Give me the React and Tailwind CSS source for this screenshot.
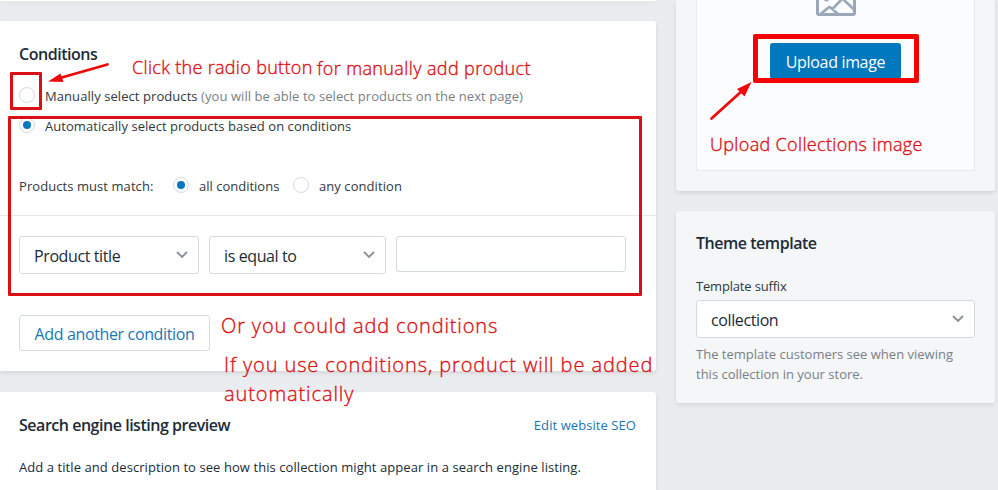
import React from "react";

function Radio({ checked }) {
  return (
    <span className="flex size-4 shrink-0 items-center justify-center rounded-full border border-[#d3dbe2] bg-white">
      {checked && <span className="size-2 rounded-full bg-[#0078bd]" />}
    </span>
  );
}

function Select({ children, className }) {
  return (
    <div className={`flex h-[38px] items-center justify-between rounded-[3px] border border-[#d3dbe2] bg-white pr-2.5 pl-3.5 text-base tracking-[-0.39px] ${className}`}>
      <span className="pt-0.5">{children}</span>
      <svg width="12" height="8" viewBox="0 0 12 8" fill="none" stroke="#8a9199" strokeWidth="1.9">
        <path d="M1 1l5 5 5-5" />
      </svg>
    </div>
  );
}

const card = "shadow-[0_2px_4px_rgba(0,0,0,0.1)]";
const small = "text-[13px] leading-5 tracking-[0.07px]";
const heading = "h-6 text-base leading-6 font-semibold tracking-[-0.47px] text-[#212b35]";
const note = "absolute whitespace-nowrap font-light text-[#dc1014] [-webkit-text-stroke:0.35px_#dc1014]";

export default function App() {
  return (
    <div className="relative flex h-[490px] w-[998px] gap-5 overflow-hidden bg-[#e9edf0] font-['Open_Sans',sans-serif] text-sm text-[#31373d]">
      <main className="flex w-[656px] flex-col whitespace-nowrap">
        <section className={`h-px bg-white ${card}`} />

        <section className={`mt-5 h-[350px] rounded-r-[3px] bg-white ${card}`}>
          <div className="h-[195px] border-b border-[#e6e9ec] px-[19px] pt-[21px]">
            <h2 className={heading}>Conditions</h2>
            <div className="mt-[15px] flex h-[30px] items-center gap-[10px]">
              <div className="pb-[2px]"><Radio /></div>
              <span className={small}>Manually select products <span className="text-[#798087]">(you will be able to select products on the next page)</span></span>
            </div>
            <div className="flex h-[30px] items-center gap-[10px]">
              <div className="pb-[2px]"><Radio checked /></div>
              <span className="text-[13px] leading-5 tracking-[0.05px]">Automatically select products based on conditions</span>
            </div>
            <div className={`mt-[30px] flex h-[30px] items-center ${small}`}>
              <span className="w-[154px]">Products must match:</span>
              <div className="pb-[2px]"><Radio checked /></div>
              <span className="ml-[10px] w-[94px] tracking-normal">all conditions</span>
              <div className="pb-[2px]"><Radio /></div>
              <span className="ml-[10px]">any condition</span>
            </div>
          </div>
          <div className="flex gap-[10px] px-[19px] pt-5 text-[#212b35]">
            <Select className="w-[180px]">Product title</Select>
            <Select className="w-[177px]">is equal to</Select>
            <div className="h-9 w-[230px] rounded-[3px] border border-[#d3dbe2] bg-white" />
          </div>
          <button className="mt-[41px] ml-[19px] h-9 w-[191px] rounded-[3px] border border-[#d3dbe2] pt-0.5 text-base tracking-[-0.36px] text-[#1878b5]">Add another condition</button>
        </section>

        <section className={`mt-[21px] h-[98px] rounded-tr-[3px] bg-white px-[19px] pt-[21px] ${card}`}>
          <div className="flex h-6 items-center justify-between pr-[1px]">
            <h2 className={heading}>Search engine listing preview</h2>
            <a className={`text-[#1878b5] ${small}`}>Edit website SEO</a>
          </div>
          <p className={`mt-5 text-[#212b35] ${small}`}>Add a title and description to see how this collection might appear in a search engine listing.</p>
        </section>
      </main>

      <aside className="flex w-[319px] flex-col gap-5 whitespace-nowrap">
        <section className={`h-[191px] rounded-b-[3px] bg-[#f4f6f8] px-5 ${card}`}>
          <div className="flex h-[171px] flex-col items-center border border-t-0 border-[#e6e9ed] bg-[#fafcfd]">
            <svg width="40" height="16" viewBox="0 0 40 16" fill="none" stroke="#98a8b8" strokeWidth="3">
              <path d="M1.5-4v17q0 1.500 1.500 1.500h34q1.500 0 1.500-1.500v-17" />
              <path d="M4 14.500L12.500 7.500q1-.7 2 0L22 14M16 9.500L25.500-.5q1-.6 2 0L38 9.500" strokeWidth="2.6" />
              <circle cx="10.5" cy="-1" r="2.5" fill="#98a8b8" stroke="none" />
            </svg>
            <button className="mt-[27px] h-9 w-[131px] rounded-[3px] bg-[#0078bd] pt-0.5 text-base tracking-[-0.33px] text-white">Upload image</button>
          </div>
        </section>
        <section className={`h-[192px] rounded-[3px] bg-[#f4f6f8] px-5 pt-5 ${card}`}>
          <h2 className={heading}>Theme template</h2>
          <div className="mt-[21px] mb-[4px] text-[13px] leading-5 tracking-[-0.18px]">Template suffix</div>
          <Select className="w-[279px] text-[#212b35]">collection</Select>
          <p className="mt-1.5 text-[13px] leading-5 text-[#798087]">The template customers see when viewing<br />this collection in your store.</p>
        </section>
      </aside>

      <div className="absolute top-[72px] left-[10px] h-[38px] w-8 rounded-[1px] border-3 border-[#dc1014]" />
      <div className="absolute top-[116px] left-2 h-[180px] w-[634px] rounded-[1px] border-3 border-[#dc1014]" />
      <div className="absolute top-[34px] left-[753px] h-[49px] w-[166px] rounded-[2px] border-5 border-[#f70000]" />
      <svg className="absolute inset-0" width="998" height="490" fill="#ee0a0a" stroke="#ee0a0a">
        <path d="M107.500 64.500L60 78" strokeWidth="2.8" strokeLinecap="round" />
        <path d="M48 81.500L60.500 73.500L63.500 82z" stroke="none" />
        <path d="M711.500 118.500L743 90" strokeWidth="2.8" strokeLinecap="round" />
        <path d="M751.500 82L737 89L744.500 96.500z" stroke="none" />
      </svg>
      <div className={`${note} top-[53px] left-[132px] text-[18px] leading-7 tracking-[0.32px]`}>Click the radio button</div>
      <div className={`${note} top-[54px] left-[317px] text-[18px] leading-7 tracking-[0.38px]`}>for manually add product</div>
      <div className={`${note} top-[130px] left-[710px] text-[18px] leading-7 tracking-[0.34px]`}>Upload Collections image</div>
      <div className={`${note} top-[311px] left-[221px] text-[20px] leading-[29px] tracking-[0.86px]`}>Or you could add conditions</div>
      <div className={`${note} top-[350px] left-[224px] text-[20px] leading-[29px] tracking-[0.9px]`}>If you use conditions, product will be added<br />automatically</div>
    </div>
  );
}
